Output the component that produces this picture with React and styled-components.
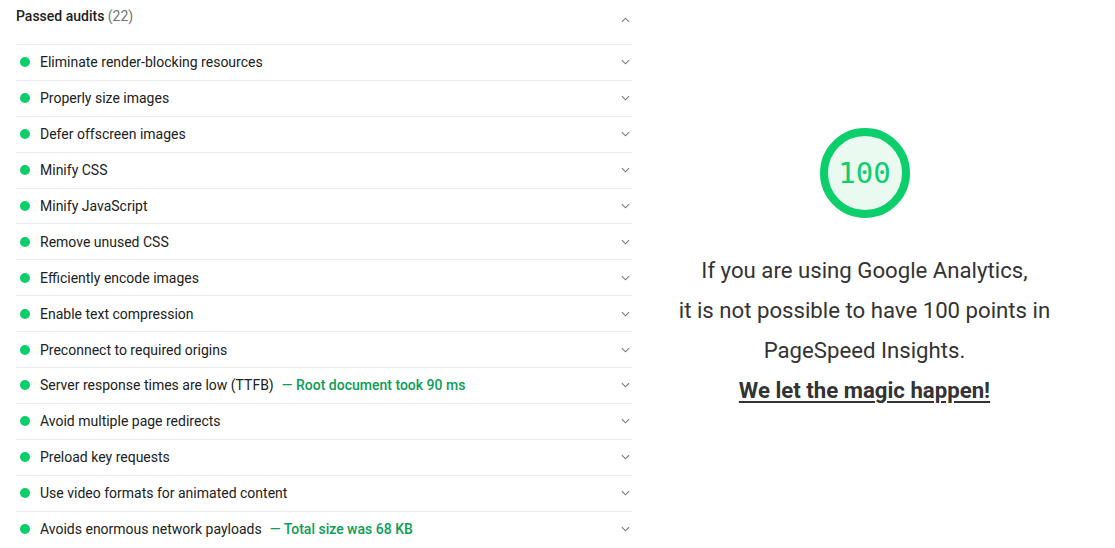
import React from 'react';
import styled, { createGlobalStyle } from 'styled-components';

const GlobalStyle = createGlobalStyle`
  html, body {
    margin: 0;
    padding: 0;
    background: #fff;
    font-family: Roboto, "Liberation Sans", sans-serif;
  }
`;

const audits = [
  { title: 'Eliminate render-blocking resources' },
  { title: 'Properly size images' },
  { title: 'Defer offscreen images' },
  { title: 'Minify CSS' },
  { title: 'Minify JavaScript' },
  { title: 'Remove unused CSS' },
  { title: 'Efficiently encode images' },
  { title: 'Enable text compression' },
  { title: 'Preconnect to required origins' },
  { title: 'Server response times are low (TTFB)', note: 'Root document took 90 ms' },
  { title: 'Avoid multiple page redirects' },
  { title: 'Preload key requests' },
  { title: 'Use video formats for animated content' },
  { title: 'Avoids enormous network payloads', note: 'Total size was 68 KB' },
];

function Chevron({ up }) {
  return (
    <ChevronIcon viewBox="0 0 10 6" $up={up}>
      <path d="M1 1 L5 5 L9 1" fill="none" stroke="#757575" strokeWidth="1.2" />
    </ChevronIcon>
  );
}

function App() {
  return (
    <>
      <GlobalStyle />
      <Page>
        <AuditList>
          <Header>
            <HeaderTitle>
              Passed audits <Count>(22)</Count>
            </HeaderTitle>
            <Chevron up />
          </Header>
          {audits.map((a) => (
            <Row key={a.title}>
              <Dot />
              <Title>{a.title}</Title>
              {a.note && <Note>— {a.note}</Note>}
              <Spacer />
              <Chevron />
            </Row>
          ))}
        </AuditList>
        <Aside>
          <Gauge>100</Gauge>
          <Message>
            If you are using Google Analytics,
            <br />
            it is not possible to have 100 points in
            <br />
            PageSpeed Insights.
            <br />
            <Magic>We let the magic happen!</Magic>
          </Message>
        </Aside>
      </Page>
    </>
  );
}

const Page = styled.div`
  display: flex;
  width: 1115px;
  height: 548px;
  overflow: hidden;
`;

const AuditList = styled.div`
  width: 616px;
  margin-left: 16px;
  display: flex;
  flex-direction: column;
`;

const Header = styled.div`
  display: flex;
  align-items: center;
  justify-content: space-between;
  height: 44px;
  padding-right: 1px;
  box-sizing: border-box;
  padding-bottom: 4px;
`;

const HeaderTitle = styled.div`
  font-size: 14px;
  font-weight: 500;
  color: #212121;
  margin-top: -8px;
`;

const Count = styled.span`
  font-weight: 400;
  color: #757575;
`;

const ChevronIcon = styled.svg`
  width: 9px;
  height: 6px;
  margin-right: 1px;
  transform: ${(p) => (p.$up ? 'rotate(180deg)' : 'none')};
`;

const Row = styled.div`
  display: flex;
  align-items: center;
  height: 35.9px;
  flex: none;
  box-sizing: border-box;
  border-top: 1px solid #ebebeb;
  font-size: 14px;
  padding-left: 4px;
  padding-right: 1px;
`;

const Dot = styled.span`
  width: 10px;
  height: 10px;
  border-radius: 50%;
  background: #0cce6b;
  margin-right: 10px;
  flex: none;
`;

const Title = styled.span`
  color: #212121;
`;

const Note = styled.span`
  color: #0b9e54;
  font-weight: 500;
  margin-left: 8px;
`;

const Spacer = styled.span`
  flex: 1;
`;

const Aside = styled.div`
  flex: 1;
  display: flex;
  flex-direction: column;
  align-items: center;
  padding-top: 128px;
  padding-right: 18px;
`;

const Gauge = styled.div`
  width: 90px;
  height: 90px;
  box-sizing: border-box;
  border: 8px solid #0cce6b;
  border-radius: 50%;
  background: #eafaf1;
  color: #0cce6b;
  font-family: "DejaVu Sans Mono", monospace;
  font-size: 29px;
  display: flex;
  align-items: center;
  justify-content: center;
`;

const Message = styled.p`
  margin: 32px 0 0;
  text-align: center;
  font-size: 22.2px;
  line-height: 40px;
  color: #333;
`;

const Magic = styled.span`
  font-weight: 700;
  text-decoration: underline;
  text-underline-offset: 3px;
`;

export default App;
